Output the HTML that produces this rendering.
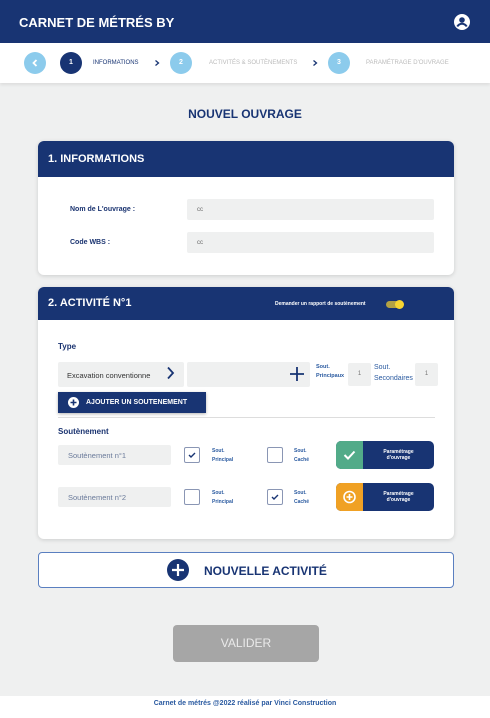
<!DOCTYPE html>
<html><head><meta charset="utf-8"><style>
*{box-sizing:border-box;margin:0;padding:0}
body{width:490px;height:718px;background:#eff0f0;font-family:"Liberation Sans",sans-serif;position:relative;overflow:hidden;color:#1a3370}
.abs{position:absolute}
.hdr{left:0;top:0;width:490px;height:43px;background:#183473;color:#fff;font-weight:bold;font-size:13px}
.steps{left:0;top:43px;width:490px;height:40px;background:#fff;box-shadow:0 2px 3px rgba(0,0,0,.08)}
.c{position:absolute;width:22px;height:22px;border-radius:50%;color:#fff;font-size:7px;font-weight:bold;text-align:center;line-height:22px}
.lb{position:absolute;font-size:6px;top:17px}
.card{background:#fff;border-radius:6px;box-shadow:0 1px 4px rgba(0,0,0,.15);overflow:hidden}
.ch{background:#183473;color:#fff;font-weight:bold;font-size:11px;padding-left:10px}
.in{background:#eff0f0;border-radius:2px}
.sm{font-size:6px;color:#2a5aa0;line-height:9px;font-weight:bold}
.cb{position:absolute;width:16px;height:16px;border:1px solid #8a96b4;border-radius:2px;background:#fff}
.pb{position:absolute;width:98px;height:28px;border-radius:5px;background:#183473;overflow:hidden}
.pb .ic{position:absolute;left:0;top:0;width:27px;height:28px}
.pb .t{position:absolute;left:27px;right:0;top:8px;text-align:center;color:#fff;font-size:5px;line-height:6px;font-weight:bold}
</style></head><body>
<div class="abs hdr"><div class="abs" style="left:19px;top:15px">CARNET DE MÉTRÉS BY</div>
<svg class="abs" style="left:454px;top:14px" width="16" height="16" viewBox="0 0 16 16"><circle cx="8" cy="8" r="8" fill="#fff"/><circle cx="8" cy="6" r="2.8" fill="#183473"/><path d="M3.3 12.5c1.2-2 2.8-2.8 4.7-2.8s3.5.8 4.7 2.8" stroke="#183473" stroke-width="2" fill="none"/></svg></div>
<div class="abs steps">
<div class="c" style="left:24px;top:9px;background:#8ccbec"><svg width="22" height="22" viewBox="0 0 22 22"><path d="M12.5 8l-3 3 3 3" stroke="#fff" stroke-width="1.8" fill="none"/></svg></div>
<div class="c" style="left:60px;top:9px;background:#183473">1</div>
<div class="lb" style="left:93px;color:#183473">INFORMATIONS</div>
<svg class="abs" style="left:153px;top:16px" width="8" height="8" viewBox="0 0 8 8"><path d="M2.5 1.5l3 2.5-3 2.5" stroke="#183473" stroke-width="1.3" fill="none"/></svg>
<div class="c" style="left:170px;top:9px;background:#8ccbec">2</div>
<div class="lb" style="left:209px;color:#bbb">ACTIVITÉS &amp; SOUTÈNEMENTS</div>
<svg class="abs" style="left:311px;top:16px" width="8" height="8" viewBox="0 0 8 8"><path d="M2.5 1.5l3 2.5-3 2.5" stroke="#183473" stroke-width="1.3" fill="none"/></svg>
<div class="c" style="left:328px;top:9px;background:#8ccbec">3</div>
<div class="lb" style="left:366px;color:#bbb">PARAMÉTRAGE D'OUVRAGE</div>
</div>
<div class="abs" style="left:0;width:490px;top:107px;text-align:center;font-weight:bold;font-size:12px;color:#183473">NOUVEL OUVRAGE</div>

<div class="abs card" style="left:38px;top:141px;width:416px;height:134px">
<div class="ch" style="height:36px;line-height:36px">1. INFORMATIONS</div>
<div class="abs" style="left:32px;top:65px;font-size:7px;font-weight:bold">Nom de L'ouvrage :</div>
<div class="abs in" style="left:149px;top:58px;width:247px;height:21px;font-size:6px;color:#666;padding:8px 10px">cc</div>
<div class="abs" style="left:32px;top:98px;font-size:7px;font-weight:bold">Code WBS :</div>
<div class="abs in" style="left:149px;top:91px;width:247px;height:21px;font-size:6px;color:#666;padding:8px 10px">cc</div>
</div>

<div class="abs card" style="left:38px;top:287px;width:416px;height:252px">
<div class="ch" style="height:33px;line-height:33px">2. ACTIVITÉ N°1</div>
<div class="abs" style="left:237px;top:14px;font-size:5px;color:#fff;font-weight:bold">Demander un rapport de soutènement</div>
<div class="abs" style="left:348px;top:14px;width:16px;height:7px;border-radius:4px;background:#b3a244"></div>
<div class="abs" style="left:357px;top:13px;width:9px;height:9px;border-radius:50%;background:#f7d531"></div>
<div class="abs" style="left:20px;top:55px;font-size:8px;font-weight:bold">Type</div>
<div class="abs in" style="left:20px;top:75px;width:126px;height:25px;font-size:7.5px;color:#333;padding:9px 9px">Excavation conventionne</div>
<svg class="abs" style="left:127px;top:79px" width="12" height="14" viewBox="0 0 12 14"><path d="M3 1.5l5 5.5-5 5.5" stroke="#183473" stroke-width="1.8" fill="none"/></svg>
<div class="abs in" style="left:149px;top:75px;width:123px;height:25px"></div>
<svg class="abs" style="left:252px;top:80px" width="14" height="14" viewBox="0 0 14 14"><path d="M7 0v14M0 7h14" stroke="#183473" stroke-width="1.8"/></svg>
<div class="abs sm" style="left:278px;top:76px;font-size:5.5px">Sout.<br>Principaux</div>
<div class="abs in" style="left:310px;top:76px;width:23px;height:23px;font-size:6px;color:#777;text-align:center;line-height:23px">1</div>
<div class="abs" style="left:336px;top:75px;font-size:7px;color:#2a5aa0;line-height:11px">Sout.<br>Secondaires</div>
<div class="abs in" style="left:377px;top:76px;width:23px;height:23px;font-size:6px;color:#777;text-align:center;line-height:23px">1</div>
<div class="abs" style="left:20px;top:105px;width:148px;height:21px;background:#183473;color:#fff;font-size:7px;font-weight:bold;line-height:21px;padding-left:28px;box-shadow:0 1px 3px rgba(0,0,0,.3)">AJOUTER UN SOUTENEMENT</div>
<svg class="abs" style="left:30px;top:110px" width="11" height="11" viewBox="0 0 11 11"><circle cx="5.5" cy="5.5" r="5.5" fill="#fff"/><path d="M5.5 2.5v6M2.5 5.5h6" stroke="#183473" stroke-width="1.6"/></svg>
<div class="abs" style="left:20px;top:130px;width:377px;height:1px;background:#ddd"></div>
<div class="abs" style="left:20px;top:140px;font-size:8px;font-weight:bold">Soutènement</div>
<div class="abs in" style="left:20px;top:158px;width:113px;height:20px;font-size:7.5px;color:#6a7a9a;padding:6px 10px">Soutènement n°1</div>
<div class="cb" style="left:146px;top:160px"><svg width="14" height="14" viewBox="0 0 14 14"><path d="M4 7l2 2 4-4" stroke="#183473" stroke-width="1.4" fill="none"/></svg></div>
<div class="abs sm" style="left:174px;top:160px;font-size:5px">Sout.<br>Principal</div>
<div class="cb" style="left:229px;top:160px"></div>
<div class="abs sm" style="left:256px;top:160px;font-size:5px">Sout.<br>Caché</div>
<div class="pb" style="left:298px;top:154px"><div class="ic" style="background:#52ab89"><svg width="27" height="28" viewBox="0 0 27 28"><path d="M8.5 14l3.5 3.5 6.5-7" stroke="#fff" stroke-width="2" fill="none"/></svg></div><div class="t">Paramétrage<br>d'ouvrage</div></div>
<div class="abs in" style="left:20px;top:200px;width:113px;height:20px;font-size:7.5px;color:#6a7a9a;padding:6px 10px">Soutènement n°2</div>
<div class="cb" style="left:146px;top:202px"></div>
<div class="abs sm" style="left:174px;top:202px;font-size:5px">Sout.<br>Principal</div>
<div class="cb" style="left:229px;top:202px"><svg width="14" height="14" viewBox="0 0 14 14"><path d="M4 7l2 2 4-4" stroke="#183473" stroke-width="1.4" fill="none"/></svg></div>
<div class="abs sm" style="left:256px;top:202px;font-size:5px">Sout.<br>Caché</div>
<div class="pb" style="left:298px;top:196px"><div class="ic" style="background:#f0a124"><svg width="27" height="28" viewBox="0 0 27 28"><circle cx="13.5" cy="14" r="5.5" stroke="#fff" stroke-width="1.6" fill="none"/><path d="M13.5 11v6M10.5 14h6" stroke="#fff" stroke-width="1.6"/></svg></div><div class="t">Paramétrage<br>d'ouvrage</div></div>
</div>

<div class="abs" style="left:38px;top:552px;width:416px;height:36px;background:#fff;border:1px solid #5a7fc0;border-radius:4px"></div>
<svg class="abs" style="left:167px;top:559px" width="22" height="22" viewBox="0 0 22 22"><circle cx="11" cy="11" r="11" fill="#183473"/><path d="M11 5v12M5 11h12" stroke="#fff" stroke-width="2.2"/></svg>
<div class="abs" style="left:204px;top:564px;font-size:12px;font-weight:bold;color:#183473">NOUVELLE ACTIVITÉ</div>

<div class="abs" style="left:173px;top:625px;width:146px;height:37px;background:#a6a6a6;border-radius:4px;color:#eaeaea;text-align:center;line-height:37px;font-size:12px">VALIDER</div>

<div class="abs" style="left:0;top:696px;width:490px;height:22px;background:#fff;text-align:center;font-size:7px;color:#2a5aa0;line-height:16px;font-weight:bold">Carnet de métrés @2022 réalisé par Vinci Construction</div>
</body></html>
